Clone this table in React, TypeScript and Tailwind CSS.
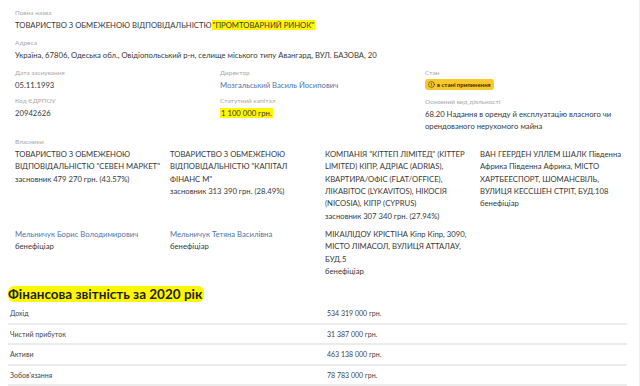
import { FiAlertCircle } from "react-icons/fi";

const OWNERS_TOP = [
  {
    name: 'ТОВАРИСТВО З ОБМЕЖЕНОЮ ВІДПОВІДАЛЬНІСТЮ "СЕВЕН МАРКЕТ"',
    role: "засновник 479 270 грн. (43.57%)",
  },
  {
    name: 'ТОВАРИСТВО З ОБМЕЖЕНОЮ ВІДПОВІДАЛЬНІСТЮ "КАПІТАЛ ФІНАНС М"',
    role: "засновник 313 390 грн. (28.49%)",
  },
  {
    name: 'КОМПАНІЯ "КІТТЕП ЛІМІТЕД" (KITTEP LIMITED) КІПР, АДРІАС (ADRIAS), КВАРТИРА/ОФІС (FLAT/OFFICE), ЛІКАВІТОС (LYKAVITOS), НІКОСІЯ (NICOSIA), КІПР (CYPRUS)',
    role: "засновник 307 340 грн. (27.94%)",
  },
  {
    name: "ВАН ГЕЕРДЕН УЛЛЕМ ШАЛК Південна Африка Південна Африка, МІСТО ХАРТБЕЕСПОРТ, ШОМАНСВІЛЬ, ВУЛИЦЯ КЕССШЕН СТРІТ, БУД.108",
    role: "бенефіціар",
  },
];

const OWNERS_BOTTOM = [
  { name: "Мельничук Борис Володимирович", role: "бенефіціар", link: true },
  { name: "Мельничук Тетяна Василівна", role: "бенефіціар", link: true },
  {
    name: "МІКАІЛІДОУ КРІСТІНА Кіпр Кіпр, 3090, МІСТО ЛІМАСОЛ, ВУЛИЦЯ АТТАЛАУ, БУД.5",
    role: "бенефіціар",
    link: false,
  },
];

const FINANCE = [
  ["Дохід", "534 319 000 грн."],
  ["Чистий прибуток", "31 387 000 грн."],
  ["Активи", "463 138 000 грн."],
  ["Зобов'язання", "78 783 000 грн."],
];

function Label({ children }: { children: React.ReactNode }) {
  return <div className="text-[6.5px] leading-[12px] text-[#a8a8a8]">{children}</div>;
}

function App() {
  return (
    <div className="w-[640px] h-[386px] overflow-hidden bg-white font-['Lato',sans-serif] text-[#383838] border-r border-[#f0f0f0]">
      <div className="pl-[15px] pt-[7px] text-[7.7px] leading-[12.3px]">
        <Label>Повна назва</Label>
        <div>
          ТОВАРИСТВО З ОБМЕЖЕНОЮ ВІДПОВІДАЛЬНІСТЮ
          <span className="bg-[#fff700] px-[1px]">"ПРОМТОВАРНИЙ РИНОК"</span>
        </div>

        <div className="mt-[6px]">
          <Label>Адреса</Label>
          <div>Україна, 67806, Одеська обл., Овідіопольський р-н, селище міського типу Авангард, ВУЛ. БАЗОВА, 20</div>
        </div>

        <div className="mt-[5px] grid grid-cols-[205px_205px_1fr]">
          <div>
            <Label>Дата заснування</Label>
            <div>05.11.1993</div>
            <div className="mt-[4px]">
              <Label>Код ЄДРПОУ</Label>
              <div>20942626</div>
            </div>
          </div>
          <div>
            <Label>Директор</Label>
            <div className="text-[#4f74a8]">Мозгальський Василь Йосипович</div>
            <div className="mt-[4px]">
              <Label>Статутний капітал</Label>
              <div>
                <span className="bg-[#fff700] px-[1px]">1 100 000 грн.</span>
              </div>
            </div>
          </div>
          <div>
            <Label>Стан</Label>
            <div className="flex">
              <span className="flex items-center gap-[2px] rounded-[3px] bg-[#f7c92f] px-[3px] text-[6px] leading-[11px] font-bold text-[#3a2e00]">
                <FiAlertCircle className="w-[7px] h-[7px]" />
                в стані припинення
              </span>
            </div>
            <div className="mt-[6px]">
              <Label>Основний вид діяльності</Label>
              <div className="w-[196px]">68.20 Надання в оренду й експлуатацію власного чи орендованого нерухомого майна</div>
            </div>
          </div>
        </div>

        <div className="mt-[4px]">
          <Label>Власники</Label>
          <div className="grid grid-cols-[155px_155px_155px_155px] gap-y-[6px]">
            {OWNERS_TOP.map((o) => (
              <div key={o.name} className="pr-[8px]">
                <div>{o.name}</div>
                <div>{o.role}</div>
              </div>
            ))}
            {OWNERS_BOTTOM.map((o) => (
              <div key={o.name} className="pr-[8px]">
                <div className={o.link ? "text-[#4f74a8]" : ""}>{o.name}</div>
                <div>{o.role}</div>
              </div>
            ))}
          </div>
        </div>
      </div>

      <div className="mt-[7px] pl-[8px] pr-[12px]">
        <h2 className="text-[13.5px] leading-[20px] font-bold text-[#1f1f1f]">
          <span className="bg-[#fff700] rounded-[6px] pr-[2px]">Фінансова звітність за 2020 рік</span>
        </h2>
        <div className="text-[7px] text-[#444]">
          {FINANCE.map(([k, v]) => (
            <div key={k} className="flex h-[20.5px] items-center border-b-2 border-[#ececec]">
              <div className="w-[319px] pl-[2px]">{k}</div>
              <div>{v}</div>
            </div>
          ))}
        </div>
      </div>
    </div>
  );
}

export default App;
